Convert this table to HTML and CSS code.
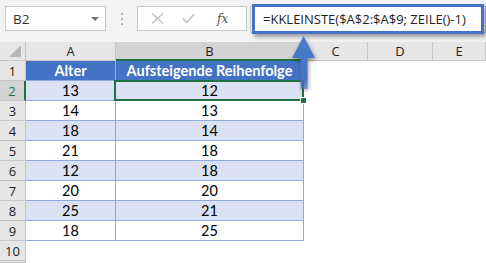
FILE: index.html
```html
<!DOCTYPE html>
<html lang="de">
<head>
    <meta charset="UTF-8">
    <title>KKLEINSTE</title>
    <link rel="stylesheet" href="styles.css">
</head>
<body>
    <div class="toolbar">
        <div class="namebox">
            <span>B2</span>
            <span class="caret"></span>
        </div>
        <div class="grip"><i></i><i></i><i></i></div>
        <div class="fxbox">
            <svg class="ico" width="13" height="11" viewBox="0 0 13 11"><path d="M1 0.5 L12 10.5 M12 0.5 L1 10.5" stroke="#c4c4c4" stroke-width="1.6" fill="none"/></svg>
            <svg class="ico" width="13" height="11" viewBox="0 0 13 11"><path d="M1 5.5 L4.8 9.5 L12 1" stroke="#c4c4c4" stroke-width="1.8" fill="none"/></svg>
            <span class="fx">fx</span>
        </div>
        <div class="input"></div>
    </div>

    <div class="sheet">
        <div class="corner"><span class="tri"></span></div>
        <div class="colhead">A</div>
        <div class="colhead active">B</div>
        <div class="colhead">C</div>
        <div class="colhead">D</div>
        <div class="colhead">E</div>

        <div class="rowhead">1</div>
        <div class="cell head">Alter</div>
        <div class="cell head">Aufsteigende Reihenfolge</div>
        <div class="blank"></div><div class="blank"></div><div class="blank"></div>

        <div class="rowhead active">2</div>
        <div class="cell band">13</div>
        <div class="cell band sel">12</div>
        <div class="blank"></div><div class="blank"></div><div class="blank"></div>

        <div class="rowhead">3</div>
        <div class="cell">14</div>
        <div class="cell">13</div>
        <div class="blank"></div><div class="blank"></div><div class="blank"></div>

        <div class="rowhead">4</div>
        <div class="cell band">18</div>
        <div class="cell band">14</div>
        <div class="blank"></div><div class="blank"></div><div class="blank"></div>

        <div class="rowhead">5</div>
        <div class="cell">21</div>
        <div class="cell">18</div>
        <div class="blank"></div><div class="blank"></div><div class="blank"></div>

        <div class="rowhead">6</div>
        <div class="cell band">12</div>
        <div class="cell band">18</div>
        <div class="blank"></div><div class="blank"></div><div class="blank"></div>

        <div class="rowhead">7</div>
        <div class="cell">20</div>
        <div class="cell">20</div>
        <div class="blank"></div><div class="blank"></div><div class="blank"></div>

        <div class="rowhead">8</div>
        <div class="cell band">25</div>
        <div class="cell band">21</div>
        <div class="blank"></div><div class="blank"></div><div class="blank"></div>

        <div class="rowhead">9</div>
        <div class="cell">18</div>
        <div class="cell">25</div>
        <div class="blank"></div><div class="blank"></div><div class="blank"></div>

        <div class="rowhead">10</div>
        <div class="blank"></div><div class="blank"></div><div class="blank"></div><div class="blank"></div><div class="blank"></div>

        <!-- next row only peeks in at the bottom edge -->
        <div class="rowhead"></div>
        <div class="blank"></div><div class="blank"></div><div class="blank"></div><div class="blank"></div><div class="blank"></div>
    </div>

    <!-- formula callout and pointer -->
    <div class="callout">=KKLEINSTE($A$2:$A$9; ZEILE()-1)</div>
    <svg class="arrow" width="32" height="60" viewBox="0 0 32 60">
        <defs>
            <linearGradient id="shaft" x1="0" y1="0" x2="0" y2="1">
                <stop offset="0" stop-color="#4a7ccc"/>
                <stop offset="0.8" stop-color="#4472c4"/>
                <stop offset="1" stop-color="#4472c4" stop-opacity="0.6"/>
            </linearGradient>
        </defs>
        <path d="M15.5 2 L27 24 L19.5 24 L19.5 55 L12.5 55 L12.5 24 L4 24 Z" fill="url(#shaft)"/>
    </svg>
</body>
</html>
```

FILE: styles.css
```css
body {
    margin: 0;
    width: 486px;
    height: 263px;
    overflow: hidden;
    position: relative;
    background: #fff;
    font-family: "Open Sans", "Noto Sans", sans-serif;
}

/* name box + formula bar */
.toolbar {
    height: 42px;
    background: #f3f3f3;
    display: flex;
    align-items: flex-start;
    padding: 6px 0 0 5px;
    box-sizing: border-box;
}
.namebox {
    width: 101px;
    height: 25px;
    box-sizing: border-box;
    background: #fff;
    border: 1px solid #c8c8c8;
    display: flex;
    align-items: center;
    justify-content: space-between;
    padding: 0 6px 0 7px;
    font-size: 13.5px;
    color: #333;
}
.caret {
    width: 0;
    height: 0;
    border-left: 4px solid transparent;
    border-right: 4px solid transparent;
    border-top: 4px solid #6f6f6f;
}
.grip {
    width: 31px;
    height: 25px;
    display: flex;
    flex-direction: column;
    align-items: center;
    justify-content: center;
    gap: 3px;
}
.grip i {
    width: 2px;
    height: 2px;
    background: #b5b5b5;
}
.fxbox {
    width: 110px;
    height: 25px;
    box-sizing: border-box;
    background: #fff;
    border: 1px solid #c8c8c8;
    display: flex;
    align-items: center;
    padding-left: 13px;
    gap: 18px;
}
.fx {
    font-family: "DejaVu Serif", "Liberation Serif", serif;
    font-style: italic;
    font-size: 12px;
    color: #555;
    margin-left: 4px;
}
.input {
    flex: 1;
    height: 25px;
    margin-left: 3px;
    background: #fff;
    border: 1px solid #c8c8c8;
}

/* worksheet grid */
.sheet {
    display: grid;
    grid-template-columns: 26px 90px 188px 64px 65px 1fr;
    grid-template-rows: 19px repeat(10, 20px) 2px;
    overflow: hidden;
}
.sheet > div {
    box-sizing: border-box;
}
.corner {
    background: #e6e6e6;
    border-right: 1px solid #c6c6c6;
    border-bottom: 1px solid #c6c6c6;
    position: relative;
}
.tri {
    position: absolute;
    right: 4px;
    bottom: 3px;
    width: 0;
    height: 0;
    border-left: 12px solid transparent;
    border-bottom: 12px solid #b8b8b8;
}
.colhead {
    background: #e6e6e6;
    border-right: 1px solid #c6c6c6;
    border-bottom: 1px solid #c6c6c6;
    display: flex;
    align-items: center;
    justify-content: center;
    font-size: 13px;
    color: #222;
}
.colhead.active {
    background: #d3d3d3;
    border-bottom: 2px solid #217346;
}
.rowhead {
    background: #e6e6e6;
    border-right: 1px solid #c6c6c6;
    border-bottom: 1px solid #c6c6c6;
    display: flex;
    align-items: center;
    justify-content: center;
    font-size: 13px;
    color: #222;
}
.rowhead.active {
    background: #d3d3d3;
    border-right: 2px solid #217346;
    color: #217346;
}
.cell {
    border-right: 1px solid #8eaadb;
    border-bottom: 1px solid #8eaadb;
    display: flex;
    align-items: center;
    justify-content: center;
    font-family: "Lato", "Liberation Sans", sans-serif;
    font-size: 14.5px;
    color: #000;
}
.cell.head {
    background: #4472c4;
    color: #fff;
    font-weight: bold;
}
.cell.band {
    background: #d9e1f2;
}
.cell.sel {
    position: relative;
}
.cell.sel::before {
    content: "";
    position: absolute;
    left: -2px;
    top: -1px;
    right: -1px;
    bottom: -1px;
    border: 2px solid #217346;
}
.cell.sel::after {
    content: "";
    position: absolute;
    right: -4px;
    bottom: -4px;
    width: 5px;
    height: 5px;
    background: #217346;
    border: 1px solid #fff;
}

/* formula callout */
.callout {
    position: absolute;
    left: 252px;
    top: 4px;
    width: 232px;
    height: 30px;
    box-sizing: border-box;
    border: 3px solid #4472c4;
    background: #fff;
    box-shadow: 2px 3px 4px rgba(0, 0, 0, 0.35);
    display: flex;
    align-items: center;
    padding-left: 8px;
    font-size: 13px;
    color: #222;
    white-space: nowrap;
}
.arrow {
    position: absolute;
    left: 288px;
    top: 34px;
    filter: drop-shadow(1px 2px 2px rgba(0, 0, 0, 0.4));
}
```
